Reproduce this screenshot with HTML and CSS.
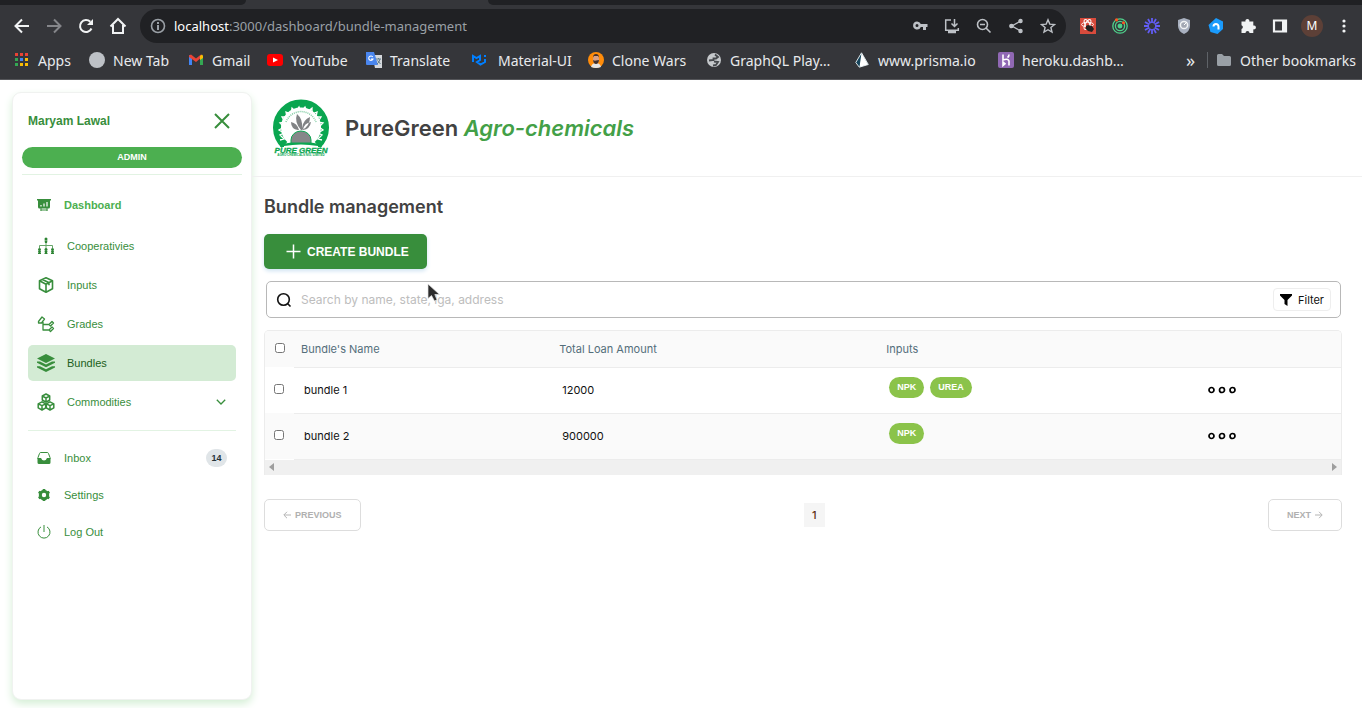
FILE: index.html
```html
<!DOCTYPE html>
<html lang="en">
<head>
<meta charset="utf-8">
<title>Bundle management</title>
<meta name="viewport" content="width=device-width, initial-scale=1">
<link rel="stylesheet" href="styles.css">
</head>
<body>
<header class="browser">
  <div class="tabstrip"><span class="tab-left"></span><span class="tab-active"></span><span class="tab-right"></span></div>
  <div class="toolbar">
    <button class="tool" aria-label="Back"><svg width="16" height="16" viewBox="0 0 16 16" fill="none" stroke="#f1f3f4" stroke-width="2"><path d="M15 8H2M8 1.5L1.5 8 8 14.5"/></svg></button>
    <button class="tool" aria-label="Forward"><svg width="16" height="16" viewBox="0 0 16 16" fill="none" stroke="#85868a" stroke-width="2"><path d="M1 8h13M8 1.5L14.500 8 8 14.500"/></svg></button>
    <button class="tool" aria-label="Reload"><svg width="16" height="16" viewBox="0 0 16 16" fill="none" stroke="#f1f3f4" stroke-width="2"><path d="M13.500 10.500A6 6 0 1 1 12.300 3.800"/><path d="M15 1v6H9z" fill="#f1f3f4" stroke="none"/></svg></button>
    <button class="tool" aria-label="Home"><svg width="18" height="18" viewBox="0 0 18 18" fill="none" stroke="#f1f3f4" stroke-width="2"><path d="M1.500 9.500L9 2l7.500 7.500M4 8v8h10V8"/></svg></button>
    <div class="omnibox">
      <svg width="16" height="16" viewBox="0 0 16 16" fill="none" stroke="#9aa0a6" stroke-width="1.600"><circle cx="8" cy="8" r="6.500"/><path d="M8 7v5M8 4v2" stroke-width="2"/></svg>
      <span class="url"><b>localhost</b>:3000/dashboard/bundle-management</span>
      <button class="tool" aria-label="Passwords"><svg width="16" height="16" viewBox="0 0 16 16"><path fill="#bdc1c6" fill-rule="evenodd" d="M5 3.500a4 4 0 1 0 3.800 5.500H11v3h3V9h1.500V6H8.800A4 4 0 0 0 5 3.500zM5 6a1.500 1.500 0 1 1 0 3 1.500 1.500 0 0 1 0-3z"/></svg></button>
      <button class="tool" aria-label="Install"><svg width="16" height="16" viewBox="0 0 16 16" fill="none" stroke="#bdc1c6" stroke-width="1.500"><path d="M7 2H1.700v10.300h12.600V10M10.500 1v7M7.500 5.500l3 3 3-3"/><path d="M4 14h8" stroke-width="2.500"/></svg></button>
      <button class="tool" aria-label="Zoom"><svg width="16" height="16" viewBox="0 0 16 16" fill="none" stroke="#bdc1c6" stroke-width="1.600"><circle cx="6.500" cy="6.500" r="5"/><path d="M10 10l4.500 4.500M4 6.500h5"/></svg></button>
      <button class="tool" aria-label="Share"><svg width="16" height="16" viewBox="0 0 16 16" fill="#bdc1c6" stroke="#bdc1c6" stroke-width="1.300"><path d="M12.500 3L4 8l8.500 5" fill="none"/><circle cx="3.500" cy="8" r="1.700"/><circle cx="12.500" cy="3" r="1.600"/><circle cx="12.500" cy="13" r="1.600"/></svg></button>
      <button class="tool" aria-label="Bookmark"><svg width="16" height="16" viewBox="0 0 16 16" fill="none" stroke="#bdc1c6" stroke-width="1.400"><path d="M8 1.800l1.800 4.300 4.700.4-3.600 3 1.100 4.600L8 11.700l-4 2.400 1.100-4.600-3.600-3 4.700-.4z"/></svg></button>
    </div>
    <button class="tool" aria-label="Testing playground"><svg width="16" height="16" viewBox="0 0 16 16"><path fill="#d84b3c" d="M0 0h16v16H0z"/><g fill="none" stroke="#fff" stroke-width=".9"><ellipse cx="7.500" cy="6.500" rx="6" ry="2.200"/><ellipse cx="7.500" cy="6.500" rx="5.500" ry="2.200" transform="rotate(60 7.500 6.500)"/><ellipse cx="7.500" cy="6.500" rx="5.500" ry="2.200" transform="rotate(120 7.500 6.500)"/></g><path fill="#222" d="M6 8l2-1 4 1 2 3-2 3-4-1-2-2z"/></svg></button>
    <button class="tool" aria-label="Orbit"><svg width="16" height="16" viewBox="0 0 16 16" fill="none" stroke="#4fd18b" stroke-width="1.300"><circle cx="8" cy="8" r="7.200"/><circle cx="8" cy="8" r="4.600"/><circle cx="8" cy="8" r="1.800" fill="#4fd18b"/><circle cx="4.500" cy="1.800" r="1.600" fill="#ff5722" stroke="none"/><circle cx="11.500" cy="4.800" r="1.500" fill="#ff5722" stroke="none"/></svg></button>
    <button class="tool" aria-label="Loom"><svg width="16" height="16" viewBox="0 0 16 16" stroke="#625df5" stroke-width="1.800"><path d="M8 0v5M8 11v5M0 8h5M11 8h5M4 1l2.500 4.400M9.500 10.600L12 15M1 4l4.400 2.500M10.600 9.500L15 12M12 1L9.500 5.400M6.500 10.600L4 15M15 4l-4.400 2.500M5.400 9.500L1 12"/></svg></button>
    <button class="tool" aria-label="Privacy shield"><svg width="16" height="16" viewBox="0 0 16 16"><path d="M8 0l6 2v6q0 5-6 8-6-3-6-8V2z" fill="#a9b1c0"/><circle cx="8" cy="7" r="3.600" fill="#a3a8b3" stroke="#f1f3f4" stroke-width="1.500"/><path d="M8 7l3-3" stroke="#fff"/></svg></button>
    <button class="tool" aria-label="Connector"><svg width="16" height="16" viewBox="0 0 16 16"><path d="M8 0l7 3.500V11l-5.500 5-7-2L.5 7z" fill="#1a9bfc"/><path d="M5.500 8.500a2.500 2.500 0 0 1 5 0v3" fill="none" stroke="#fff" stroke-width="2"/></svg></button>
    <button class="tool" aria-label="Extensions"><svg width="16" height="16" viewBox="0 0 16 16"><path fill="#f1f3f4" d="M1.500 3.500h4a2 2 0 1 1 3.800 0h4v4a2 2 0 1 1 0 3.800v3.700H9.500a2 2 0 0 0-4 0h-4v-4a2 2 0 0 0 0-3.800z"/></svg></button>
    <button class="tool" aria-label="Side panel"><svg width="16" height="16" viewBox="0 0 16 16"><path d="M2 2.500h12v11H2z" fill="none" stroke="#f1f3f4" stroke-width="2.200"/><path fill="#f1f3f4" d="M10 2h4v12h-4z"/></svg></button>
    <button class="tool" aria-label="Profile"><span class="avatar">M</span></button>
    <button class="tool" aria-label="Menu"><svg width="16" height="16" viewBox="0 0 16 16" fill="#f1f3f4"><circle cx="8" cy="3" r="1.600"/><circle cx="8" cy="8" r="1.600"/><circle cx="8" cy="13" r="1.600"/></svg></button>
  </div>
  <nav class="bookmarks" aria-label="Bookmarks">
    <a href="#"><svg width="16" height="16" viewBox="0 0 16 16"><path fill="#ea4335" d="M1 1h3v3H1zM6 1h3v3H6zM11 1h3v3h-3z"/><path fill="#34a853" d="M1 6h3v3H1zM1 11h3v3H1z"/><path fill="#4285f4" d="M6 6h3v3H6z"/><path fill="#fbbc04" d="M11 6h3v3h-3zM6 11h3v3H6zM11 11h3v3h-3z"/></svg>Apps</a>
    <a href="#"><svg width="16" height="16" viewBox="0 0 16 16"><circle cx="8" cy="8" r="8" fill="#bdc1c6"/></svg>New Tab</a>
    <a href="#"><svg width="16" height="16" viewBox="0 0 16 16"><path fill="#4285f4" d="M1 3l3 2v8H1z"/><path fill="#34a853" d="M12 5l3-2v10h-3z"/><path fill="#ea4335" d="M1 3.500L3 2.500l5 4 5-4 1 1V5L8 10 1 5z"/><path fill="#fbbc04" d="M12 4l2-1.500L15 4v2l-3 2z"/></svg>Gmail</a>
    <a href="#"><svg width="16" height="16" viewBox="0 0 16 16"><rect y="2" width="16" height="12" rx="3" fill="#f00"/><path fill="#fff" d="M6 5.500v5L11 8z"/></svg>YouTube</a>
    <a href="#"><svg width="16" height="16" viewBox="0 0 16 16"><path fill="#d5d8dc" d="M6 3h10v13H9z"/><path fill="#4a86ee" d="M0 0h8l4 13H1q-1 0-1-1z"/><path d="M6.800 5A2.200 2.200 0 1 0 7 7H5" fill="none" stroke="#fff" stroke-width="1.100"/><path d="M10 7h5M12.500 6v1M14 7q-1 4-3 5M11.500 8.500l3 3.500" fill="none" stroke="#607d8b"/></svg>Translate</a>
    <a href="#" class="wide"><svg width="16" height="16" viewBox="0 0 16 16" fill="none" stroke="#007fff" stroke-width="2"><path d="M2 10V4l3.500 2L9 4v4L6 10l3.500 2.500L14 10V7M14 3v2"/></svg>Material-UI</a>
    <a href="#"><svg width="16" height="16" viewBox="0 0 16 16"><circle cx="8" cy="8" r="8" fill="#ff8c0a"/><path d="M3 15q1-4 5-4t5 4q-5 2-10 0z" fill="#e5e5e5"/><ellipse cx="8" cy="7" rx="3" ry="4.300" fill="#d7a087"/><path d="M5 5.500Q5 2 8 2t3 3.500L10 4H6zM5 8q1.500 1 3 .5T11 8q-.5 4-3 4T5 8z" fill="#41302d"/></svg>Clone Wars</a>
    <a href="#"><svg width="16" height="16" viewBox="0 0 16 16"><circle cx="8" cy="8" r="7" fill="#c5c8cb"/><path d="M9 2.500L12 5l-2 1.500H7.500V8L3 8.500M8 9.500l4 .5-2 3-3 .5" fill="none" stroke="#44474b" stroke-width="1.800"/></svg>GraphQL Play…</a>
    <a href="#"><svg width="16" height="16" viewBox="0 0 16 16"><path d="M7.500.8L1.800 10.500l3.500 4.700 9-2.700z" fill="#16445b" stroke="#dce5e8"/><path d="M7.500 1l6.500 11.400-8.500 2.600z" fill="#fff"/></svg>www.prisma.io</a>
    <a href="#"><svg width="16" height="16" viewBox="0 0 16 16"><rect width="16" height="16" rx="2" fill="#9068b4"/><path d="M5 2.500V8q5-2 6 1v4.500M11 2.500q0 2-1.500 3M5 10v3.500l2-1.700z" fill="none" stroke="#fff" stroke-width="1.600"/></svg>heroku.dashb…</a>
    <button class="more" aria-label="More bookmarks">»</button>
    <a href="#" class="other"><svg width="16" height="16" viewBox="0 0 16 16"><path fill="#9aa0a6" d="M2.500 2H6l2 2h5.500q1.500 0 1.500 1.500v7q0 1.500-1.500 1.500h-11Q1 14 1 12.500v-9Q1 2 2.500 2z"/></svg>Other bookmarks</a>
  </nav>
</header>

<div class="app">
  <aside class="sidebar">
    <div class="user"><strong>Maryam Lawal</strong><button class="close" aria-label="Close menu"><svg width="16" height="16" viewBox="0 0 16 16" stroke="#388e3c" stroke-width="2"><path d="M1 1l14 14M15 1L1 15"/></svg></button></div>
    <div class="role">ADMIN</div>
    <nav class="menu" aria-label="Main">
      <a href="#" class="item compact current"><svg width="14" height="14" viewBox="0 0 14 14"><path fill="#388e3c" d="M0 1h14v1.500h-1V9q0 1.500-1.500 1.500h-9Q1 10.500 1 9V2.500H0z"/><path d="M4 8.500V7M7 8.500V5.500M10 8.500V4" stroke="#fff" stroke-width="1.200"/><path d="M4 10v3M10 10v3M3.500 12h7" stroke="#388e3c"/></svg>Dashboard</a>
      <a href="#" class="item"><svg width="18" height="18" viewBox="0 0 18 18"><path d="M9 5v7M2.500 11V8.500h13V11" fill="none" stroke="#66a569"/><g fill="#2e8534"><circle cx="9" cy="2" r="1.500"/><path d="M7.500 3.500h3L10 6H8z"/><circle cx="2.500" cy="12.500" r="1.500"/><path d="M1 14h3l-.5 2H4v1H1v-1h.5z"/><circle cx="9" cy="12.500" r="1.500"/><path d="M7.500 14h3l-.5 2h.5v1h-3v-1H8z"/><circle cx="15.500" cy="12.500" r="1.500"/><path d="M14 14h3l-.5 2h.5v1h-3v-1h.5z"/></g></svg>Cooperativies</a>
      <a href="#" class="item"><svg width="18" height="18" viewBox="0 0 18 18" fill="none" stroke="#388e3c" stroke-width="1.600" stroke-linejoin="round"><path d="M9 1.800l6.500 3v8L9 16.200l-6.500-3.400v-8zM2.500 4.800L9 8.300l6.500-3.500M9 8.300v7.900M5.500 3.500L12 6.800v2.500"/></svg>Inputs</a>
      <a href="#" class="item"><svg width="18" height="18" viewBox="0 0 18 18" fill="none" stroke="#388e3c" stroke-width="1.300" stroke-linejoin="round"><path d="M1.500 6.500L5 2l2.500 2L4.500 8h-3zM6 7v8h6M6 9.500h6M12 9.500l3-3 1.500 1.500-3 3zM12 15l3-3 1.500 1.500-3 3z"/></svg>Grades</a>
      <a href="#" class="item selected"><svg width="18" height="18" viewBox="0 0 18 18" fill="#388e3c"><path d="M9 0l9 4.500L9 9 0 4.500zM0 7.500h3L9 10.500l6-3h3v1.200L9 13.300 0 8.700zM0 12.200h3l6 3 6-3h3v1.200L9 18l-9-4.600z"/></svg>Bundles</a>
      <a href="#" class="item"><svg width="18" height="18" viewBox="0 0 18 18" fill="none" stroke="#388e3c" stroke-width="1.500" stroke-linejoin="round"><path d="M9 1l3.700 2v4L9 9.200 5.300 7V3zM5.300 3L9 5l3.700-2M9 5v4M5 8.800l3.700 2v4L5 17l-3.800-2.200v-4zM1.200 10.800L5 12.700l3.700-1.900M5 12.700V17M13 8.800l3.800 2v4L13 17l-3.700-2.200v-4zM9.300 10.800L13 12.700l3.800-1.900M13 12.700V17"/></svg>Commodities<svg class="end" width="10" height="10" viewBox="0 0 10 10" fill="none" stroke="#388e3c" stroke-width="1.300"><path d="M.8 2.800L5 7l4.200-4.200"/></svg></a>
      <hr>
      <a href="#" class="item compact"><svg width="14" height="14" viewBox="0 0 14 14"><path d="M1 8V6.500L2.500 2.500q.3-1 1.200-1h6.600q.9 0 1.200 1L13 6.500V8" fill="none" stroke="#388e3c"/><path fill="#388e3c" d="M.5 7H4q1 2.500 3 2.500T10 7h3.500v4.500q0 1.500-1.500 1.500H2Q.5 13 .5 11.500z"/></svg>Inbox<span class="count end">14</span></a>
      <a href="#" class="item compact"><svg width="14" height="14" viewBox="0 0 14 14"><circle cx="7" cy="7" r="3.700" fill="none" stroke="#388e3c" stroke-width="3"/><path d="M5.700 1h2.600v2H5.700zM5.700 11h2.600v2H5.700zM1 5l1.300-2.200 2 1L3 6zM11 8l2 1-1.300 2.200-2-1zM9.700 3.800l2-1L13 5l-2 1zM1 9l2-1 1.300 2.200-2 1z" fill="#388e3c"/></svg>Settings</a>
      <a href="#" class="item compact"><svg width="14" height="14" viewBox="0 0 14 14" fill="none" stroke="#388e3c"><path d="M7 0v7M4 1.900a6 6 0 1 0 6 0"/></svg>Log Out</a>
    </nav>
  </aside>

  <div class="page">
    <header class="brand">
      <svg width="56" height="58" viewBox="0 0 56 58" role="img" aria-label="Pure Green logo">
        <path d="M11.500 46A24 24 0 1 1 44.500 46" fill="none" stroke="#0aa650" stroke-width="8"/>
        <path d="M7 41l4-1-4-4 4-2-5-3 5-3-4-4 5-1-3-5 5 0-1-5 5 2 1-6 4 4 3-5 2 5 4-5 2 5 5-4 0 6 5-2-1 5 5 0-3 5 5 1-4 4 4 3-5 3 4 2-4 4 4 1" fill="none" stroke="#fff" stroke-width="1.300"/>
        <path d="M9 45q19-4 38 0l2 3H7z" fill="#0aa650"/>
        <path d="M11 47q17-3 34 0v1H11z" fill="#fff"/>
        <path d="M13 23A16 16 0 0 1 43 23" fill="none" stroke="#7dcba0" stroke-width="1.500" stroke-dasharray="1 1"/>
        <path d="M18 44v-3a10 9 0 0 1 20 0v3z" fill="#868789" stroke="#0aa650"/>
        <path d="M28 31q-7-8-4-16 6 5 5 14 1-8 8-11 0 9-8 13zM25 31q-7-1-7-8 6 1 8 8zM30 31q7-1 8-8-7 1-8 8z" fill="#818385"/>
        <text x="28" y="54" text-anchor="middle" class="logo-name">PURE GREEN</text>
        <text x="28" y="57" text-anchor="middle" class="logo-sub">AGRO CHEMICALS NIG. LIMITED</text>
      </svg>
      <div class="brand-name">PureGreen <em>Agro-chemicals</em></div>
    </header>

    <main class="content">
      <h1>Bundle management</h1>
      <button class="create"><svg width="15" height="15" viewBox="0 0 15 15" stroke="#fff" stroke-width="1.500"><path d="M7.500 0.500v14M0.500 7.500h14"/></svg>CREATE BUNDLE</button>
      <form class="search" role="search">
        <svg width="16" height="16" viewBox="0 0 16 16" fill="none" stroke="#111" stroke-width="1.600"><circle cx="7.500" cy="7.500" r="5.800"/><path d="M11.500 11.500l3 3"/></svg>
        <input type="text" aria-label="Search bundles" placeholder="Search by name, state, lga, address">
        <button type="button" class="filter"><svg width="12" height="12" viewBox="0 0 12 12"><path d="M0 0h12v1.500L7.500 6v6L4.500 10V6L0 1.500z"/></svg>Filter</button>
        <svg class="pointer" width="14" height="20" viewBox="0 0 14 20"><path d="M1 1v14.500l3.500-3L7.500 18l2.500-1.200L7.800 11.500h4.700z" fill="#2c2c2c" stroke="#e4e4e4" stroke-width=".7"/></svg>
      </form>
      <div class="grid">
        <table>
          <colgroup><col class="c-check"><col class="c-name"><col class="c-amount"><col class="c-inputs"><col></colgroup>
          <thead><tr><th><input type="checkbox" aria-label="Select all bundles"></th><th>Bundle's Name</th><th>Total Loan Amount</th><th>Inputs</th><th></th></tr></thead>
          <tbody>
            <tr><td><input type="checkbox" aria-label="Select bundle 1"></td><td>bundle 1</td><td>12000</td><td><span class="tags"><span>NPK</span><span>UREA</span></span></td><td><button class="dots" aria-label="Actions for bundle 1"><svg width="28" height="8" viewBox="0 0 28 8" fill="none" stroke="#000" stroke-width="1.700"><circle cx="3.500" cy="4" r="2.500"/><circle cx="14" cy="4" r="2.500"/><circle cx="24.500" cy="4" r="2.500"/></svg></button></td></tr>
            <tr><td><input type="checkbox" aria-label="Select bundle 2"></td><td>bundle 2</td><td>900000</td><td><span class="tags"><span>NPK</span></span></td><td><button class="dots" aria-label="Actions for bundle 2"><svg width="28" height="8" viewBox="0 0 28 8" fill="none" stroke="#000" stroke-width="1.700"><circle cx="3.500" cy="4" r="2.500"/><circle cx="14" cy="4" r="2.500"/><circle cx="24.500" cy="4" r="2.500"/></svg></button></td></tr>
          </tbody>
        </table>
        <div class="track"><svg width="5" height="8" viewBox="0 0 5 8"><path d="M5 0v8L0 4z" fill="#9e9e9e"/></svg><svg width="5" height="8" viewBox="0 0 5 8"><path d="M0 0v8l5-4z" fill="#9e9e9e"/></svg></div>
      </div>
      <nav class="pager" aria-label="Pagination">
        <button class="step"><svg width="8" height="8" viewBox="0 0 8 8" fill="none" stroke="#b5b5b5"><path d="M8 4H1M4 .8L.8 4 4 7.200"/></svg>PREVIOUS</button>
        <button class="number">1</button>
        <button class="step">NEXT<svg width="8" height="8" viewBox="0 0 8 8" fill="none" stroke="#b5b5b5"><path d="M0 4h7M4 .8L7.200 4 4 7.200"/></svg></button>
      </nav>
    </main>
  </div>
</div>
</body>
</html>
```
FILE: styles.css
```css
* { box-sizing: border-box; }
body {
  margin: 0;
  min-height: 100vh;
  display: flex;
  flex-direction: column;
  background: #fff;
  font-family: Inter, "Liberation Sans", sans-serif;
}
button { font: inherit; color: inherit; border: 0; padding: 0; background: none; }
a { color: inherit; text-decoration: none; }
svg { flex: none; display: block; }

/* Browser frame */
.browser {
  background: #35363a;
  color: #e8eaed;
  font-family: "Noto Sans", sans-serif;
  border-bottom: 1px solid #55565a;
}
.tabstrip { display: flex; height: 5px; }
.tab-left { width: 246px; background: #202124; border-bottom-right-radius: 5px; }
.tab-active { width: 242px; }
.tab-right { flex: 1; background: #202124; border-bottom-left-radius: 5px; }
.toolbar { display: flex; align-items: center; height: 38px; padding: 4px 2px 0 6px; }
.tool { width: 32px; height: 32px; flex: none; display: flex; align-items: center; justify-content: center; }
.omnibox {
  flex: 1;
  min-width: 0;
  height: 34px;
  margin: 0 6px;
  padding: 0 2px 0 10px;
  display: flex;
  align-items: center;
  border-radius: 17px;
  background: #202124;
}
.url { flex: 1; min-width: 0; margin-left: 8px; overflow: hidden; white-space: nowrap; font-size: 13px; color: #9aa0a6; }
.url b { font-weight: 400; color: #fff; }
.avatar { width: 22px; height: 22px; border-radius: 50%; background: #5d4037; color: #fff; font-size: 12px; line-height: 22px; text-align: center; }
.bookmarks {
  display: grid;
  grid-template-columns: 75px 99px 79px 99px 105px 117px 118px 148px 144px 160px 1fr auto;
  align-items: center;
  height: 36px;
  padding: 0 6px 2px 14px;
  font-size: 14px;
  white-space: nowrap;
}
.bookmarks a { display: flex; align-items: center; gap: 8px; }
.bookmarks .wide { gap: 11px; }
.more { justify-self: end; padding-right: 12px; font-size: 18px; }
.bookmarks .other { border-left: 1px solid #5f6368; padding-left: 8px; height: 16px; }

/* Application */
.app { flex: 1; display: flex; align-items: stretch; }
.sidebar {
  width: 240px;
  flex: none;
  margin: 12px 0 8px 12px;
  padding: 14px 9px;
  border: 1px solid #f0f2f0;
  border-radius: 9px;
  background: #fff;
  box-shadow: 0 4px 8px #d5efd6;
  color: #388e3c;
  font-family: "Liberation Sans", Arial, sans-serif;
  font-size: 11px;
}
.user { display: flex; justify-content: space-between; align-items: center; height: 28px; padding: 0 12px 0 6px; font-size: 12px; }
.role {
  margin-top: 12px;
  height: 21px;
  border-radius: 11px;
  background: #4caf50;
  color: #fff;
  font-size: 9px;
  font-weight: 700;
  line-height: 21px;
  text-align: center;
}
.menu { margin-top: 6px; padding: 13px 6px 0; border-top: 1px solid #e2f3e3; display: flex; flex-direction: column; gap: 3px; }
.item { display: flex; align-items: center; gap: 12px; height: 36px; padding: 0 9px; border-radius: 5px; }
.item.compact { height: 34px; }
.compact svg { margin-right: 1px; }
.current { color: #4caf50; font-weight: 700; margin-bottom: 3px; }
.selected { background: #d3ebd4; color: #1b5e20; }
.item .end { margin-left: auto; }
.item svg.end { margin-right: 1px; }
.menu hr { width: 100%; margin: 7px 0; border: 0; border-top: 1px solid #e2f3e3; }
.count { width: 21px; height: 18px; border-radius: 9px; background: #e0e5e8; color: #263238; font-size: 9px; font-weight: 700; line-height: 18px; text-align: center; }

.page { flex: 1; min-width: 0; }
.brand { display: flex; align-items: center; gap: 16px; height: 97px; padding-left: 21px; border-bottom: 1px solid #f0f0f0; }
.brand-name { font-size: 22px; font-weight: 600; color: #424242; }
.brand-name em { color: #43a047; }
.logo-name { font: italic 700 8px "Liberation Sans", sans-serif; fill: #0aa650; stroke: #0aa650; stroke-width: .3; }
.logo-sub { font: 700 3px "Liberation Sans", sans-serif; fill: #0aa650; }

.content { padding: 17px 20px 0 12px; }
h1 { margin: 0; font-size: 18px; line-height: 26px; font-weight: 600; color: #424242; }
.create {
  display: flex;
  align-items: center;
  gap: 6px;
  height: 35px;
  margin-top: 14px;
  padding: 0 18px 0 22px;
  border-radius: 5px;
  background: #388e3c;
  color: #fff;
  font: 700 12px "Liberation Sans", Arial, sans-serif;
  box-shadow: 0 2px 4px #cfe3f2;
}
.search {
  position: relative;
  display: flex;
  align-items: center;
  gap: 9px;
  height: 37px;
  margin: 12px 1px 0 2px;
  padding: 0 9px;
  border: 1px solid #b8b8b8;
  border-radius: 5px;
}
.search input { flex: 1; min-width: 0; border: 0; padding: 0; outline: 0; font: 12px Inter, sans-serif; }
.search input::placeholder { color: #bdbdbd; }
.filter { display: flex; align-items: center; gap: 6px; height: 23px; padding: 0 6px; border: 1px solid #eee; border-radius: 4px; font-size: 11px; color: #111; }
.pointer { position: absolute; left: 160px; top: 1px; }

.grid { margin-top: 12px; border: 1px solid #ececec; border-bottom: 0; border-radius: 5px 5px 0 0; overflow: hidden; }
table { width: 100%; table-layout: fixed; border-collapse: collapse; font-size: 11px; color: #111; }
.c-check { width: 29px; }
.c-name { width: 24%; }
.c-amount { width: 30.4%; }
.c-inputs { width: 30%; }
th { height: 36px; padding: 0 7px; text-align: left; font-weight: 400; color: #546e7a; background: #fafafa; border-bottom: 1px solid #ececec; }
td { height: 46px; padding: 0 10px; border-bottom: 1px solid #ececec; }
tbody tr:nth-child(2) { background: #fafafa; }
th:first-child, td:first-child { padding: 0 0 2px 9px; border-bottom: 0; }
th:first-child { padding-left: 10px; }
td:last-child { padding-left: 6px; }
table input { display: block; width: 10px; height: 10px; margin: 0; }
.tags { display: flex; gap: 6px; margin-bottom: 5px; }
.tags span { height: 21px; padding: 0 8px; border-radius: 11px; background: #8bc34a; color: #fff; font: 700 9px/21px "Liberation Sans", Arial, sans-serif; }
.dots { display: block; }
.track { display: flex; justify-content: space-between; align-items: center; height: 15px; padding: 0 4px; background: #f0f0f0; }

.pager { display: flex; justify-content: space-between; align-items: center; margin-top: 24px; }
.step { display: flex; align-items: center; gap: 4px; height: 32px; padding: 0 18px; border: 1px solid #ddd; border-radius: 5px; color: #b0b0b0; font: 700 9px "Liberation Sans", Arial, sans-serif; }
.number { width: 21px; height: 24px; background: #f5f5f5; color: #5d2f12; font-size: 11px; font-weight: 500; }
```
